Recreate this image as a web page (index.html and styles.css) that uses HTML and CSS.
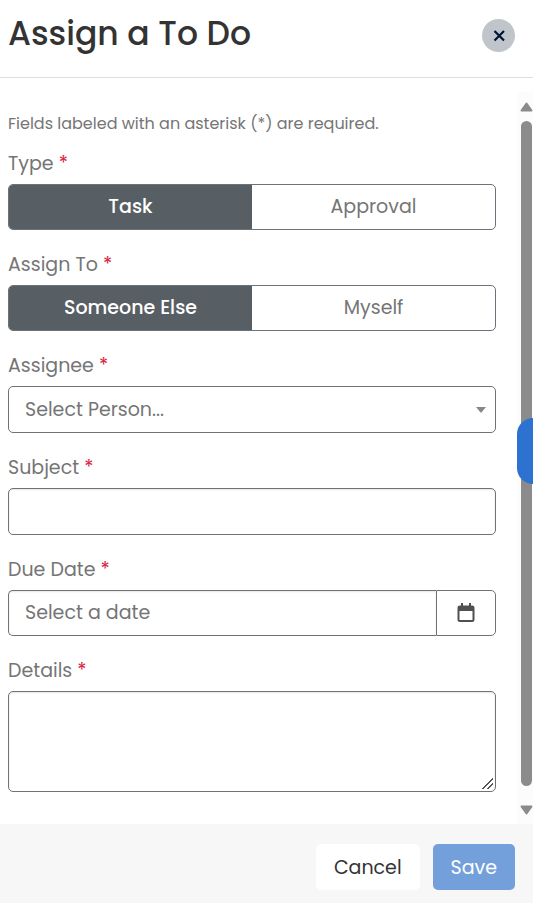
FILE: index.html
```html
<!DOCTYPE html>
<html lang="en">
<head>
  <meta charset="utf-8">
  <meta name="viewport" content="width=device-width, initial-scale=1">
  <title>Assign a To Do</title>
  <link rel="stylesheet" href="styles.css">
</head>
<body>
  <div class="modal">
    <header class="modal-header">
      <h1>Assign a To Do</h1>
      <button type="button" class="close" aria-label="Close">
        <svg width="12" height="12" viewBox="0 0 12 12"><path d="M1.500 1l9.500 9.500M11 1l-9.500 9.500"/></svg>
      </button>
    </header>

    <div class="modal-body">
      <form id="todo-form" class="todo-form">
        <p class="hint">Fields labeled with an asterisk (*) are required.</p>

        <fieldset class="field">
          <legend class="field-label">Type <span class="required">*</span></legend>
          <div class="toggle">
            <input type="radio" id="type-task" name="type" checked>
            <label for="type-task">Task</label>
            <input type="radio" id="type-approval" name="type">
            <label for="type-approval">Approval</label>
          </div>
        </fieldset>

        <fieldset class="field">
          <legend class="field-label">Assign To <span class="required">*</span></legend>
          <div class="toggle">
            <input type="radio" id="assign-else" name="assign-to" checked>
            <label for="assign-else">Someone Else</label>
            <input type="radio" id="assign-myself" name="assign-to">
            <label for="assign-myself">Myself</label>
          </div>
        </fieldset>

        <div class="field">
          <label class="field-label" for="assignee">Assignee <span class="required">*</span></label>
          <div class="select-wrap">
            <select id="assignee" name="assignee" class="control">
              <option>Select Person...</option>
            </select>
          </div>
        </div>

        <div class="field">
          <label class="field-label" for="subject">Subject <span class="required">*</span></label>
          <input type="text" id="subject" name="subject" class="control">
        </div>

        <div class="field">
          <label class="field-label" for="due-date">Due Date <span class="required">*</span></label>
          <div class="input-group">
            <input type="text" id="due-date" name="due-date" class="control" placeholder="Select a date">
            <button type="button" class="date-button" aria-label="Open calendar">
              <svg width="18" height="20" viewBox="0 0 18 20">
                <path class="fill" d="M1 3h16v5H1zM4 0h2v4H4zM12 0h2v4h-2z"/>
                <rect x="1.5" y="3.5" width="15" height="14.5" rx="1.5"/>
              </svg>
            </button>
          </div>
        </div>

        <div class="field">
          <label class="field-label" for="details">Details <span class="required">*</span></label>
          <textarea id="details" name="details" class="control"></textarea>
        </div>
      </form>

      <div class="scrollbar" aria-hidden="true">
        <svg width="13" height="10" viewBox="0 0 13 10"><path d="M6.5 1.5l5 7h-10z"/></svg>
        <div class="thumb"></div>
        <svg width="13" height="10" viewBox="0 0 13 10"><path d="M6.5 8.500l5-7h-10z"/></svg>
      </div>
    </div>

    <footer class="modal-footer">
      <button type="button" class="btn btn-cancel">Cancel</button>
      <button type="submit" form="todo-form" class="btn btn-save">Save</button>
    </footer>
  </div>

  <button type="button" class="side-tab" aria-label="Help"></button>
</body>
</html>
```

FILE: styles.css
```css
* {
  box-sizing: border-box;
}

body {
  margin: 0;
  background: #fff;
  color: #757575;
  font-family: Poppins, Inter, "Open Sans", sans-serif;
  font-size: 19px;
  line-height: 30px;
}

button, input, select, textarea {
  font: inherit;
  color: inherit;
}

button {
  cursor: pointer;
}

.modal {
  display: flex;
  flex-direction: column;
  min-height: 100vh;
}

.modal-header {
  display: flex;
  justify-content: space-between;
  align-items: flex-start;
  padding: 10px 18px 19px 8px;
  border-bottom: 1px solid #dcdddf;
}

h1 {
  margin: 0;
  color: #333;
  font-size: 33px;
  font-weight: 500;
  line-height: 48px;
}

.close {
  display: flex;
  align-items: center;
  justify-content: center;
  width: 33px;
  height: 33px;
  margin-top: 9px;
  padding: 0;
  border: none;
  border-radius: 50%;
  background: #bfc5cb;
}

.close svg {
  fill: none;
  stroke: #001433;
  stroke-width: 2.2;
}

.modal-body {
  display: flex;
  flex: 1;
  gap: 21px;
  padding: 14px 0 0 8px;
}

.todo-form {
  flex: 1;
  min-width: 0;
  padding: 17px 0 12px;
}

.hint {
  margin: 0 0 10px;
  font-size: 16px;
}

.field {
  margin: 0 0 20px;
  padding: 0;
  border: none;
  min-width: 0;
}

.field-label {
  display: block;
  margin-bottom: 5px;
  padding: 0;
}

.required {
  color: #d9233f;
}

/* two-way switches */
.toggle {
  display: flex;
  height: 46px;
  border: 1px solid #6a727a;
  border-radius: 5px;
  overflow: hidden;
}

.toggle input {
  position: absolute;
  opacity: 0;
}

.toggle label {
  flex: 1;
  line-height: 44px;
  text-align: center;
  cursor: pointer;
}

.toggle input:checked + label {
  background: #575e64;
  color: #fff;
  font-weight: 500;
}

.control {
  display: block;
  width: 100%;
  height: 47px;
  padding: 0 16px;
  border: 1px solid #707276;
  border-radius: 5px;
  background: #fff;
  box-shadow: inset 0 1px 2px rgba(0, 0, 0, 0.1);
}

.control::placeholder {
  color: #757575;
  opacity: 1;
}

.select-wrap {
  position: relative;
}

.select-wrap select {
  appearance: none;
  box-shadow: none;
}

.select-wrap::after {
  content: "";
  position: absolute;
  top: 21px;
  right: 10px;
  border: 5px solid transparent;
  border-top: 6px solid #888;
  border-bottom: none;
  pointer-events: none;
}

.input-group {
  display: flex;
  height: 46px;
}

.input-group .control {
  flex: 1;
  min-width: 0;
  height: auto;
  border-right: none;
  border-radius: 5px 0 0 5px;
}

.date-button {
  display: flex;
  align-items: center;
  justify-content: center;
  width: 60px;
  padding: 0;
  border: 1px solid #707276;
  border-radius: 0 5px 5px 0;
  background: #fff;
}

.date-button svg {
  fill: none;
  stroke: #505050;
  stroke-width: 2;
}

.date-button .fill {
  fill: #505050;
  stroke: none;
}

textarea.control {
  height: 101px;
  padding: 8px 16px;
  resize: vertical;
}

textarea::-webkit-resizer {
  background: linear-gradient(135deg, transparent 48%, #555 48%, #555 56%, transparent 56%, transparent 70%, #555 70%, #555 78%, transparent 78%) 2px 2px / 11px 11px no-repeat;
}

.scrollbar {
  display: flex;
  flex-direction: column;
  align-items: center;
  gap: 9px;
  width: 16px;
  padding: 10px 0 9px 3px;
  background: #fcfcfc;
}

.scrollbar svg {
  fill: #8b8b8b;
  stroke: #8b8b8b;
  stroke-width: 2;
  stroke-linejoin: round;
}

.scrollbar .thumb {
  flex: 1;
  width: 11px;
  margin-bottom: 10px;
  border-radius: 6px;
  background: #8b8b8b;
}

.modal-footer {
  display: flex;
  justify-content: flex-end;
  gap: 13px;
  padding: 20px 18px 13px;
  background: #f7f7f7;
}

.btn {
  height: 46px;
  padding: 2px 18px 0;
  border: none;
  border-radius: 5px;
}

.btn-cancel {
  background: #fff;
  color: #333;
}

.btn-save {
  background: #739fdb;
  color: #fff;
}

/* tab that sticks out from the right edge of the window */
.side-tab {
  position: fixed;
  top: 418px;
  right: 0;
  width: 16px;
  height: 66px;
  padding: 0;
  border: none;
  border-radius: 16px 0 0 16px;
  background: #2d72d0;
}
```
